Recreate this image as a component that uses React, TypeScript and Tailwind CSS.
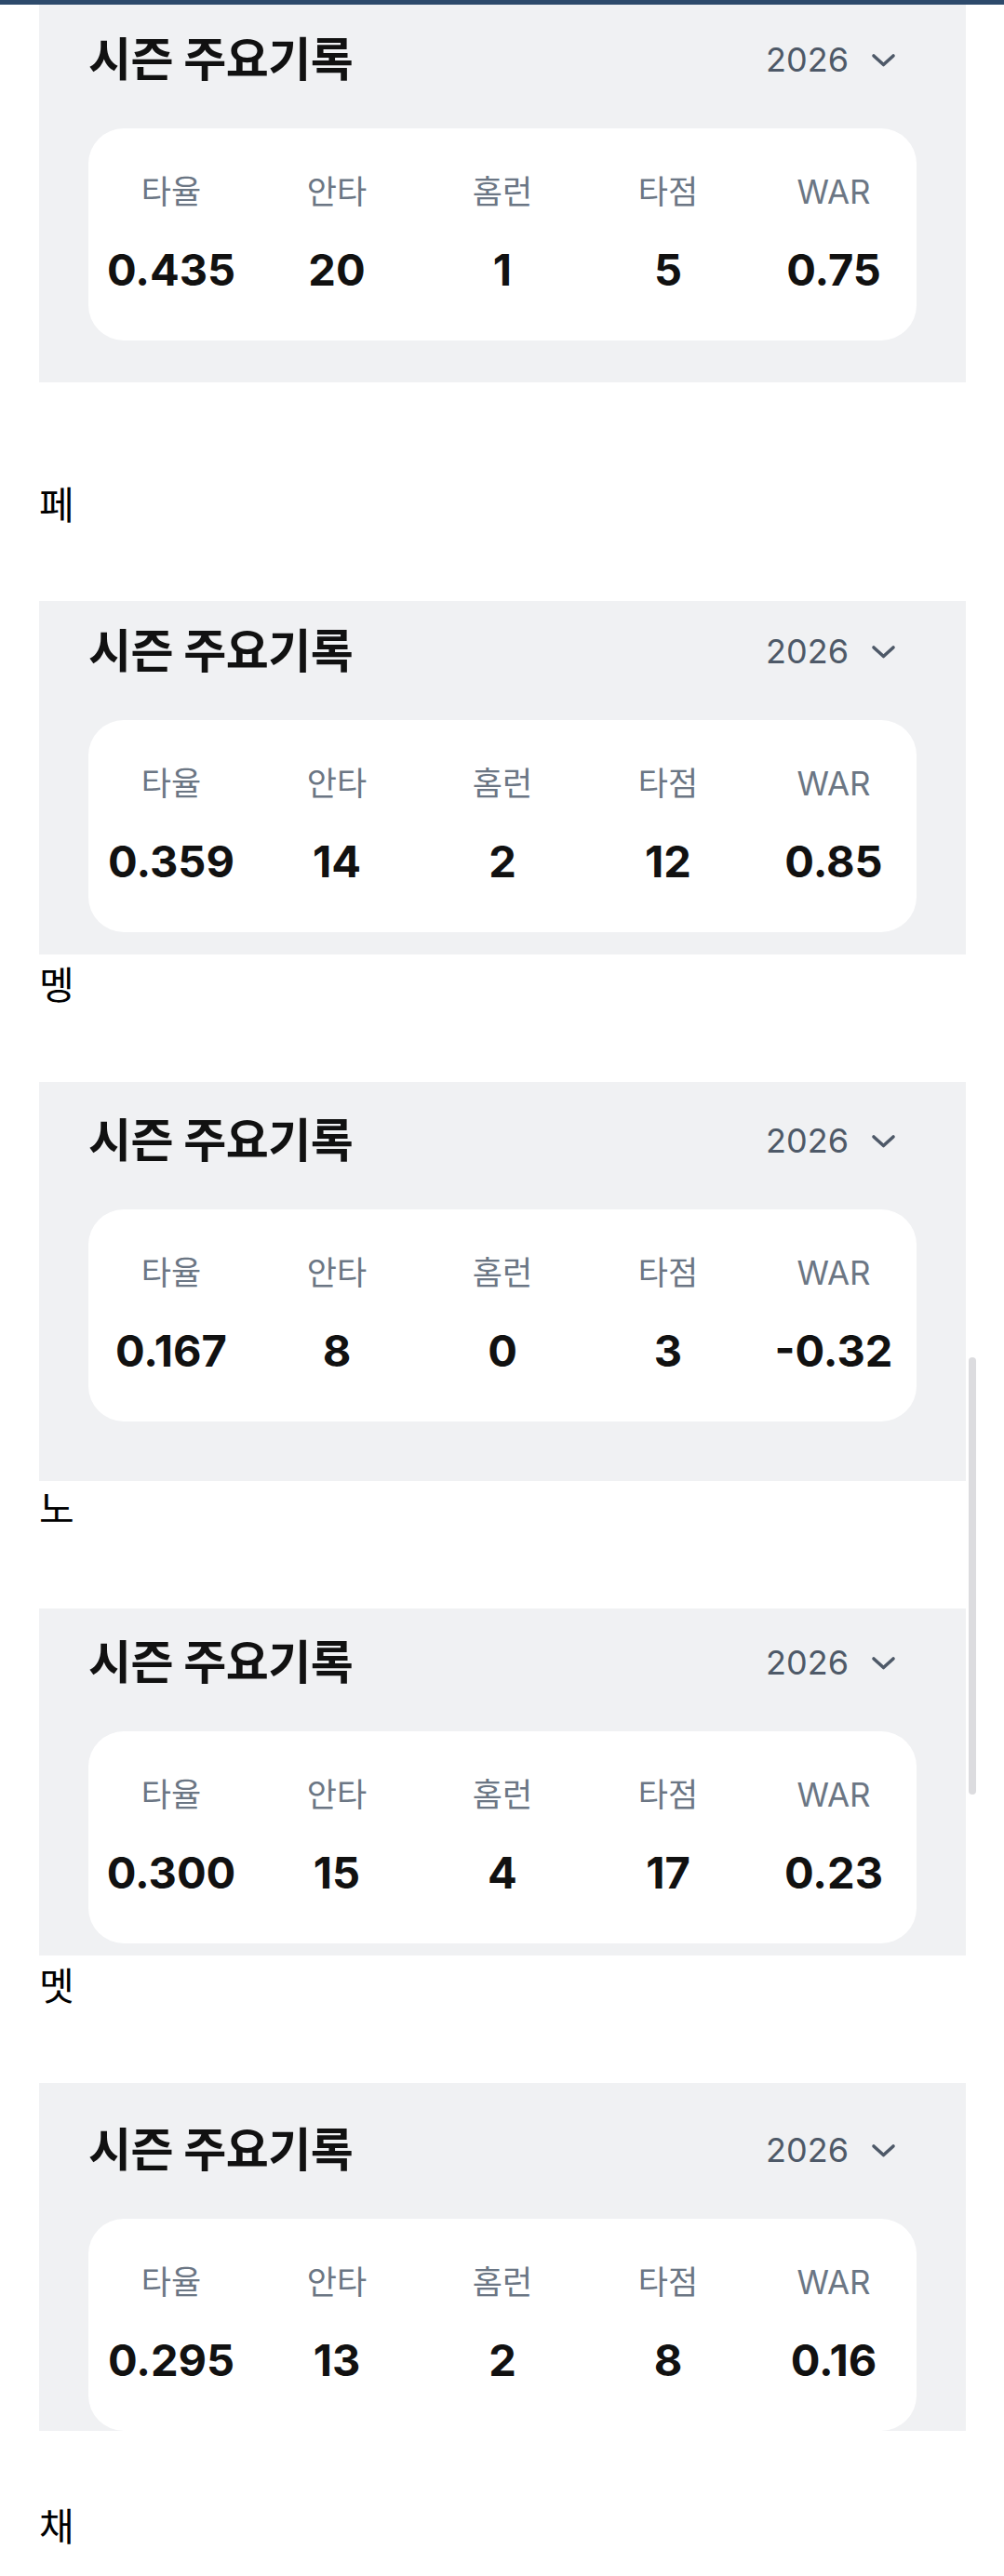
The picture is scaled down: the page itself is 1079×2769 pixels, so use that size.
import React from 'react';

type Season = {
  name?: string;
  nameClass?: string;
  cardClass: string;
  stats: string[];
};

const LABELS = ['타율', '안타', '홈런', '타점', 'WAR'];

const seasons: Season[] = [
  { cardClass: 'pt-[33px] pb-[45px]', stats: ['0.435', '20', '1', '5', '0.75'] },
  { name: '페', nameClass: 'mt-[104px] mb-[75px]', cardClass: 'pt-[28px] pb-[24px]', stats: ['0.359', '14', '2', '12', '0.85'] },
  { name: '멩', nameClass: 'mt-[5px] mb-[76px]', cardClass: 'pt-[37px] pb-[64px]', stats: ['0.167', '8', '0', '3', '-0.32'] },
  { name: '노', nameClass: 'mt-[2px] mb-[79px]', cardClass: 'pt-[32px] pb-[13px]', stats: ['0.300', '15', '4', '17', '0.23'] },
  { name: '멧', nameClass: 'mt-[5px] mb-[76px]', cardClass: 'pt-[46px] pb-0', stats: ['0.295', '13', '2', '8', '0.16'] },
];

const Chevron = () => (
  <svg width="27" height="15" viewBox="0 0 27 15" fill="none">
    <path d="M3 3 L13.5 12.5 L24 3" stroke="#4e5968" strokeWidth="3.6" strokeLinecap="round" strokeLinejoin="round" />
  </svg>
);

const SeasonCard: React.FC<{ season: Season }> = ({ season }) => (
  <section className={`bg-[#f0f1f3] px-[53px] ${season.cardClass}`}>
    {/* 헤더 */}
    <div className="flex items-center justify-between h-[52px]">
      <h2 className="text-[50px] leading-[52px] font-bold text-[#111111] tracking-[-0.5px]">시즌 주요기록</h2>
      <div className="flex items-center gap-[24px] mr-[22px]">
        <span className="text-[36px] leading-[52px] text-[#4e5968]">2026</span>
        <Chevron />
      </div>
    </div>

    {/* 기록 */}
    <div className="mt-[48px] h-[228px] bg-white rounded-[38px] pt-[46px] grid grid-cols-5">
      {LABELS.map((label, i) => (
        <div key={label} className="flex flex-col items-center">
          <span className="text-[35px] leading-[44px] text-[#6b7684]">{label}</span>
          <span className="mt-[34px] text-[47px] leading-[56px] font-bold text-[#111111]">{season.stats[i]}</span>
        </div>
      ))}
    </div>
  </section>
);

const App: React.FC = () => {
  return (
    <div
      className="relative w-[1079px] min-h-[2769px] bg-white"
      style={{ fontFamily: 'Inter, "Noto Sans CJK KR", sans-serif' }}
    >
      <div className="h-[5px] bg-[#2d4a6b]" />
      <div className="pl-[42px] pr-[41px]">
        {seasons.map((s, idx) => (
          <React.Fragment key={idx}>
            {s.name && (
              <p className={`text-[41px] leading-[56px] text-black ${s.nameClass}`}>{s.name}</p>
            )}
            <SeasonCard season={s} />
          </React.Fragment>
        ))}
        <p className="mt-[75px] text-[41px] leading-[56px] text-black">채</p>
      </div>

      {/* 스크롤바 */}
      <div className="absolute left-[1041px] top-[1459px] w-[8px] h-[470px] rounded-full bg-[#dcdcdf]" />
    </div>
  );
};

export default App;
